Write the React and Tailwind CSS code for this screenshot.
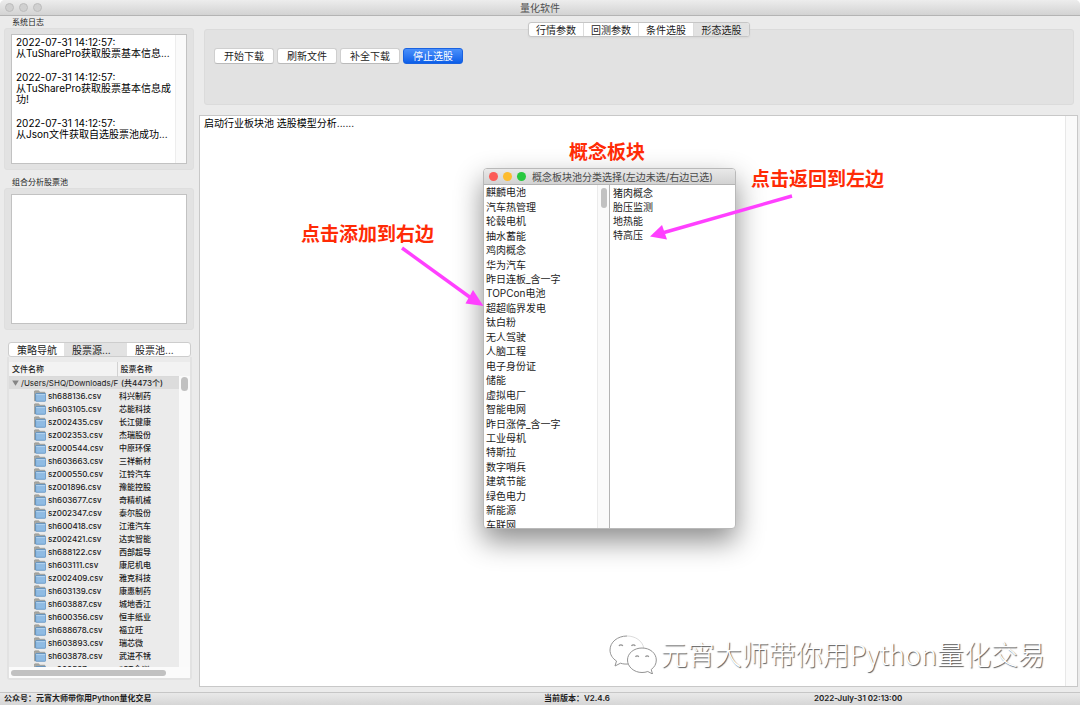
import React, { useState } from 'react';
import clsx from 'clsx';

const LOG_ENTRIES = [
  { time: '2022-07-31 14:12:57:', lines: ['从TuSharePro获取股票基本信息...'] },
  { time: '2022-07-31 14:12:57:', lines: ['从TuSharePro获取股票基本信息成', '功!'] },
  { time: '2022-07-31 14:12:57:', lines: ['从Json文件获取自选股票池成功...'] },
];

const STOCK_FILES = [
  ['sh688136.csv', '科兴制药'],
  ['sh603105.csv', '芯能科技'],
  ['sz002435.csv', '长江健康'],
  ['sz002353.csv', '杰瑞股份'],
  ['sz000544.csv', '中原环保'],
  ['sh603663.csv', '三祥新材'],
  ['sz000550.csv', '江铃汽车'],
  ['sz001896.csv', '豫能控股'],
  ['sh603677.csv', '奇精机械'],
  ['sz002347.csv', '泰尔股份'],
  ['sh600418.csv', '江淮汽车'],
  ['sz002421.csv', '达实智能'],
  ['sh688122.csv', '西部超导'],
  ['sh603111.csv', '康尼机电'],
  ['sz002409.csv', '雅克科技'],
  ['sh603139.csv', '康惠制药'],
  ['sh603887.csv', '城地香江'],
  ['sh600356.csv', '恒丰纸业'],
  ['sh688678.csv', '福立旺'],
  ['sh603893.csv', '瑞芯微'],
  ['sh603878.csv', '武进不锈'],
  ['sz000587.csv', '*ST金洲'],
];

const UNSELECTED = [
  '麒麟电池', '汽车热管理', '轮毂电机', '抽水蓄能', '鸡肉概念', '华为汽车',
  '昨日连板_含一字', 'TOPCon电池', '超超临界发电', '钛白粉', '无人驾驶', '人脑工程',
  '电子身份证', '储能', '虚拟电厂', '智能电网', '昨日涨停_含一字', '工业母机',
  '特斯拉', '数字哨兵', '建筑节能', '绿色电力', '新能源', '车联网',
];

const SELECTED = ['猪肉概念', '胎压监测', '地热能', '特高压'];

const NAV_TABS = ['策略导航', '股票源...', '股票池...'];
const PARAM_TABS = ['行情参数', '回测参数', '条件选股', '形态选股'];
const ACTIONS = ['开始下载', '刷新文件', '补全下载', '停止选股'];

const FolderIcon = () => (
  <svg width="12" height="12" viewBox="0 0 12 12" className="shrink-0" aria-hidden="true">
    <path d="M0.3 10.8V1.6Q0.3 0.8 1.1 0.8H4.6L6 2.2H10.4Q11 2.2 11 2.8V4H2V10.8Z" fill="#a9a9a3" stroke="#85857f" strokeWidth="0.5" />
    <rect x="1.6" y="3.4" width="10.1" height="7.9" rx="0.8" fill="#8fbbe3" stroke="#4f86bd" strokeWidth="0.7" />
    <path d="M2.2 4.6H11.2" stroke="#b7d6f1" strokeWidth="0.9" />
  </svg>
);

const TitleBar = () => (
  <header className="flex h-4 shrink-0 items-center border-b border-[#b4b4b4] bg-linear-to-b from-[#ededed] to-[#d3d3d3] px-[5px]">
    <div className="flex flex-1 gap-[5px]">
      {['关闭', '最小化', '缩放'].map((name) => (
        <button key={name} aria-label={name} className="size-[9px] rounded-full border border-[#bcbcbc] bg-[#d0d0d0]" />
      ))}
    </div>
    <h1 className="text-[10px] leading-3 text-[#505050]">量化软件</h1>
    <div className="flex-1" />
  </header>
);

const LogPanel = () => (
  <section>
    <h2 className="pl-3 text-[8px] leading-3">系统日志</h2>
    <div className="mr-[5px] ml-1 rounded-[3px] border border-[#dedede] bg-[#e2e2e2] px-1.5 py-[5px]">
      <div role="log" className="flex h-[130px] border border-[#c2c2c2] bg-white">
        <div className="flex min-w-0 flex-1 flex-col gap-[13px] pt-0.5 pl-1 text-[10px] leading-[11px] whitespace-nowrap text-black">
          {LOG_ENTRIES.map((entry, i) => (
            <div key={i}>
              <p>{entry.time}</p>
              {entry.lines.map((line) => <p key={line}>{line}</p>)}
            </div>
          ))}
        </div>
        <div className="w-[11px] shrink-0 border-l border-[#ededed] bg-[#fafafa]" />
      </div>
    </div>
  </section>
);

const PoolPanel = () => (
  <section>
    <label htmlFor="pool" className="block pt-1.5 pl-3 text-[8px] leading-3">组合分析股票池</label>
    <div className="mr-[5px] ml-1 rounded-[3px] border border-[#dedede] bg-[#e2e2e2] px-1.5 py-[5px]">
      <textarea id="pool" className="block h-[130px] w-full resize-none border border-[#c2c2c2] bg-white outline-none" />
    </div>
  </section>
);

const StockTree = () => {
  const [tab, setTab] = useState(1);

  return (
    <section className="mt-3 mb-3 flex min-h-0 flex-1 flex-col">
      <div role="tablist" className="mx-2 flex h-[15px] shrink-0 overflow-hidden rounded-[3px] border border-[#cdcdcd] bg-white">
        {NAV_TABS.map((name, i) => (
          <button
            key={name}
            role="tab"
            aria-selected={tab === i}
            onClick={() => setTab(i)}
            className={clsx('pl-2 text-left text-[10px] leading-3 first:w-[55px] not-first:flex-1', tab === i && 'bg-[#e2e2e2]')}
          >
            {name}
          </button>
        ))}
      </div>

      <div className="mx-[7px] flex min-h-0 flex-1 flex-col rounded-b-[3px] border-x-2 border-b-2 border-[#e2e2e2] bg-[#ebebeb] pt-[5px]">
        <div className="relative min-h-0 flex-1 overflow-hidden">
          <table className="w-full table-fixed border-collapse text-[8px] leading-3 font-medium whitespace-nowrap">
            <colgroup>
              <col className="w-[108px]" />
              <col />
            </colgroup>
            <thead>
              <tr className="h-[14px] border-b border-[#dadada] bg-[#f3f3f3] text-left">
                <th className="border-r border-[#d2d2d2] pl-[3px] font-medium">文件名称</th>
                <th className="pl-[3px] font-medium">股票名称</th>
              </tr>
            </thead>
            <tbody>
              <tr className="h-[13px] bg-[#dcdcdc]">
                <td className="p-0">
                  <div className="flex items-center gap-0.5 pl-[3px]">
                    <svg width="7" height="6" viewBox="0 0 7 6" className="shrink-0" aria-hidden="true">
                      <path d="M0.2 0.5H6.8L3.5 5.8Z" fill="#858585" />
                    </svg>
                    <span className="font-normal">/Users/SHQ/Downloads/F</span>
                  </div>
                </td>
                <td className="p-0 pl-1">(共4473个)</td>
              </tr>
              {STOCK_FILES.map(([file, name]) => (
                <tr key={file} className="h-[13px]">
                  <td className="p-0">
                    <div className="flex items-center gap-0.5 pl-[25px]">
                      <FolderIcon />
                      <span>{file}</span>
                    </div>
                  </td>
                  <td className="p-0 pl-0.5">{name}</td>
                </tr>
              ))}
            </tbody>
          </table>
          <div className="absolute top-[14px] right-0 bottom-0 w-[11px] bg-[#fafafa] px-0.5 pt-px">
            <div className="h-[14px] w-[7px] rounded-full bg-[#c1c1c1]" />
          </div>
        </div>
        <div className="flex h-[11px] shrink-0 items-center bg-[#fbfbfb] px-0.5">
          <div className="h-1.5 w-[155px] rounded-full bg-[#c1c1c1]" />
        </div>
      </div>
    </section>
  );
};

const Toolbar = () => {
  const [tab, setTab] = useState(3);

  return (
    <section className="mr-1.5 ml-[5px] pt-1.5">
      <div className="flex h-[83px] flex-col">
        <div role="tablist" className="z-10 -mb-2 flex h-[15px] self-center divide-x divide-[#dcdcdc] overflow-hidden rounded-[3px] border border-[#c6c6c6] bg-white shadow-xs">
          {PARAM_TABS.map((name, i) => (
            <button
              key={name}
              role="tab"
              aria-selected={tab === i}
              onClick={() => setTab(i)}
              className={clsx('w-[55px] text-[10px] leading-3', tab === i && 'bg-[#e2e2e2]')}
            >
              {name}
            </button>
          ))}
        </div>
        <div className="flex flex-1 items-start gap-[3px] rounded-[3px] border border-[#dbdbdb] bg-[#e2e2e2] px-[9px] pt-[18px]">
          {ACTIONS.map((name) => (
            <button
              key={name}
              className={clsx(
                'h-4 w-[60px] rounded-[3px] border text-[10px] leading-3',
                name === '停止选股'
                  ? 'border-[#1a62e0] bg-linear-to-b from-[#4a90fb] to-[#0a5ee8] text-white'
                  : 'border-[#cfcfcf] border-b-[#bababa] bg-white'
              )}
            >
              {name}
            </button>
          ))}
        </div>
      </div>
    </section>
  );
};

const OutputPane = () => (
  <section className="mt-2.5 mr-0.5 mb-[5px] flex min-h-0 flex-1 border border-[#c8c8c8] bg-white">
    <p className="flex-1 px-1 pt-px text-[10px] leading-3 text-black">启动行业板块池 选股模型分析......</p>
    <div className="w-3 shrink-0 border-l border-[#e8e8e8] bg-[#fafafa]" />
  </section>
);

const StatusBar = () => (
  <footer className="grid h-[13px] shrink-0 grid-cols-4 border-t border-[#c6c6c6] bg-linear-to-b from-[#e9e9e9] to-[#d6d6d6] text-[8px] leading-[11px] font-semibold">
    <span className="col-span-2 pl-1">公众号：元宵大师带你用Python量化交易</span>
    <span className="pl-1">当前版本：V2.4.6</span>
    <span className="pl-1">2022-July-31 02:13:00</span>
  </footer>
);

const ConceptDialog = () => (
  <div
    role="dialog"
    aria-labelledby="concept-title"
    className="absolute top-[168px] left-[483px] flex h-[361px] w-[253px] flex-col overflow-hidden rounded-[4px] border border-[#b9b9b9] bg-white shadow-[0_12px_28px_0_rgba(0,0,0,0.45)]"
  >
    <div className="flex h-4 shrink-0 items-center border-b border-[#b4b4b4] bg-linear-to-b from-[#e9e9e9] to-[#d2d2d2] pl-[5px]">
      <div className="flex gap-[5px]">
        <button aria-label="关闭" className="size-[9px] rounded-full bg-[#fc5b57]" />
        <button aria-label="最小化" className="size-[9px] rounded-full bg-[#fdbc2e]" />
        <button aria-label="缩放" className="size-[9px] rounded-full bg-[#28c83f]" />
      </div>
      <h2 id="concept-title" className="pl-1.5 text-[10px] leading-3 whitespace-nowrap text-[#4a4a4a]">
        概念板块池分类选择(左边未选/右边已选)
      </h2>
    </div>
    <div className="flex min-h-0 flex-1 text-[10px]">
      <div className="flex w-[126px] border-r border-[#b4b4b4]">
        <ul className="-mb-1 grid flex-1 auto-rows-fr items-center pl-0.5 leading-3 whitespace-nowrap">
          {UNSELECTED.map((name) => <li key={name}>{name}</li>)}
        </ul>
        <div className="w-3 border-l border-[#ebebeb] bg-[#fafafa] px-[3px] pt-[3px]">
          <div className="h-5 w-1.5 rounded-full bg-[#c1c1c1]" />
        </div>
      </div>
      <ul className="flex-1 pt-px pl-[3px] leading-[14px]">
        {SELECTED.map((name) => <li key={name}>{name}</li>)}
      </ul>
    </div>
  </div>
);

const Annotations = () => (
  <div className="pointer-events-none absolute inset-0 text-[19px] leading-6 font-bold whitespace-nowrap text-[#ff2b06]">
    <span className="absolute top-[141px] left-[569px]">概念板块</span>
    <span className="absolute top-[223px] left-[301px]">点击添加到右边</span>
    <span className="absolute top-[168px] left-[751px]">点击返回到左边</span>
    <svg width="1080" height="705" viewBox="0 0 1080 705" className="absolute top-0 left-0" aria-hidden="true">
      <g stroke="#ff40ff" strokeWidth="3.4" fill="#ff40ff">
        <path d="M402 248L471 298" />
        <path d="M792 196L664 232.500" />
        <path d="M483.500 306L473 290L465.500 303.500Z" stroke="none" />
        <path d="M650 236.500L662 225L667 239.500Z" stroke="none" />
      </g>
    </svg>
  </div>
);

const Watermark = () => (
  <div className="pointer-events-none absolute right-[35px] bottom-[31px] flex items-center gap-1">
    <svg width="48" height="40" viewBox="0 0 48 40" fill="none" aria-hidden="true">
      <g stroke="#949494" strokeWidth="1" strokeLinejoin="round">
        <path d="M18 2C8.500 2 1 8.200 1 16C1 20.600 3.500 24.500 7.500 27L6 32L11.500 29.200C14 30 16 30.200 19 30" fill="#fff" />
        <path d="M18 2C26.500 2 33.500 7 34.700 14" stroke="#dcdcdc" />
        <path d="M33 14C25 14 18.500 19.200 18.500 26C18.500 32.800 25 38.500 33 38.500C35 38.500 37 38.200 38.800 37.500L43.500 40L42.200 35.500C45.500 33.200 47.300 30 47.300 26C47.300 19.200 41 14 33 14Z" fill="#fff" />
        <path d="M10 12A2.200 2.200 0 0 1 13.800 12M22.500 12A2.200 2.200 0 0 1 26.300 12M26.500 22.800A2 2 0 0 1 29.800 22.800M36.500 22.800A2 2 0 0 1 39.800 22.800" strokeWidth="1.300" />
      </g>
    </svg>
    <span className="font-['Noto_Sans_CJK_SC',sans-serif] text-[27px] leading-10 font-light whitespace-nowrap text-white [text-shadow:1px_1px_1px_#555]">
      元宵大师带你用Python量化交易
    </span>
  </div>
);

const App = () => (
  <div className="relative flex h-screen flex-col overflow-hidden rounded-t-[5px] bg-[#ebebeb] font-['Inter','Noto_Sans_CJK_SC',sans-serif] text-[#1c1c1c]">
    <TitleBar />
    <div className="flex min-h-0 flex-1">
      <aside className="flex w-[199px] shrink-0 flex-col">
        <LogPanel />
        <PoolPanel />
        <StockTree />
      </aside>
      <main className="flex min-w-0 flex-1 flex-col">
        <Toolbar />
        <OutputPane />
      </main>
    </div>
    <StatusBar />
    <Watermark />
    <ConceptDialog />
    <Annotations />
  </div>
);

export default App;
